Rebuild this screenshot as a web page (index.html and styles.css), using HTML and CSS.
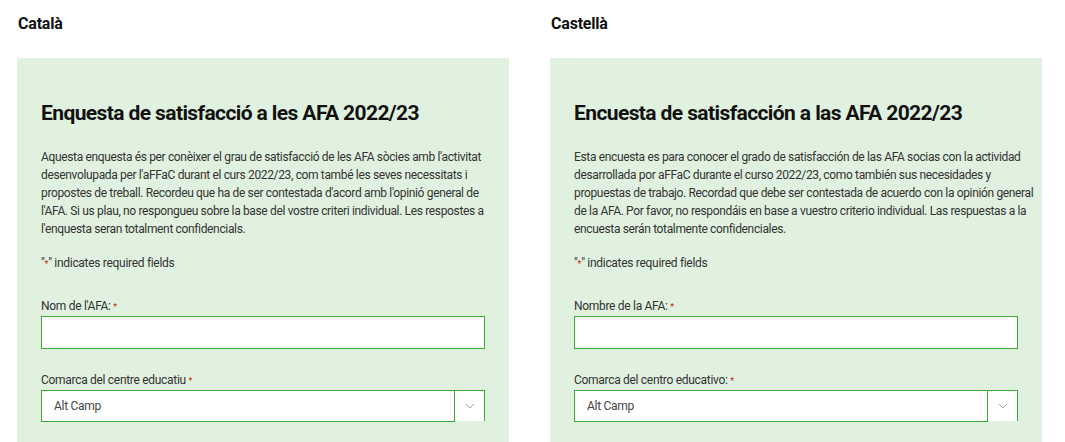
FILE: index.html
```html
<!DOCTYPE html>
<html>
  <head>
    <meta charset="utf-8">
    <title>Enquesta AFA 2022/23</title>
    <link rel="stylesheet" href="styles.css">
  </head>
  <body>
    <div class="columns">
      <div class="column">
        <h3 class="lang">Català</h3>
        <div class="card">
          <h2 class="title">Enquesta de satisfacció a les AFA 2022/23</h2>
          <p class="intro">Aquesta enquesta és per conèixer el grau de satisfacció de les AFA sòcies amb l'activitat<br>desenvolupada per l'aFFaC durant el curs 2022/23, com també les seves necessitats i<br>propostes de treball. Recordeu que ha de ser contestada d'acord amb l'opinió general de<br>l'AFA. Si us plau, no respongueu sobre la base del vostre criteri individual. Les respostes a<br>l'enquesta seran totalment confidencials.</p>
          <p class="required">"<span class="star">*</span>" indicates required fields</p>
          <div class="field">
            <label for="nom-ca">Nom de l'AFA: <span class="star">*</span></label>
            <input class="input" type="text" id="nom-ca">
          </div>
          <div class="field">
            <label for="comarca-ca">Comarca del centre educatiu <span class="star">*</span></label>
            <div class="select">
              <div class="select-value" id="comarca-ca">Alt Camp</div>
              <div class="select-arrow">
                <svg width="10" height="6" viewBox="0 0 10 6"><path d="M1 1l4 4 4-4" fill="none" stroke="#9ab" stroke-width="1"/></svg>
              </div>
            </div>
          </div>
        </div>
      </div>
      <div class="column">
        <h3 class="lang">Castellà</h3>
        <div class="card">
          <h2 class="title">Encuesta de satisfacción a las AFA 2022/23</h2>
          <p class="intro">Esta encuesta es para conocer el grado de satisfacción de las AFA socias con la actividad<br>desarrollada por aFFaC durante el curso 2022/23, como también sus necesidades y<br>propuestas de trabajo. Recordad que debe ser contestada de acuerdo con la opinión general<br>de la AFA. Por favor, no respondáis en base a vuestro criterio individual. Las respuestas a la<br>encuesta serán totalmente confidenciales.</p>
          <p class="required">"<span class="star">*</span>" indicates required fields</p>
          <div class="field">
            <label for="nom-es">Nombre de la AFA: <span class="star">*</span></label>
            <input class="input" type="text" id="nom-es">
          </div>
          <div class="field">
            <label for="comarca-es">Comarca del centro educativo: <span class="star">*</span></label>
            <div class="select">
              <div class="select-value" id="comarca-es">Alt Camp</div>
              <div class="select-arrow">
                <svg width="10" height="6" viewBox="0 0 10 6"><path d="M1 1l4 4 4-4" fill="none" stroke="#9ab" stroke-width="1"/></svg>
              </div>
            </div>
          </div>
        </div>
      </div>
    </div>
  </body>
</html>
```

FILE: styles.css
```css
html {
font-size: 12px;
}

body {
font-family: "Roboto", "Liberation Sans", sans-serif;
margin: 0;
padding: 0;
color: #333;
background: #fff;
overflow: hidden;
}

.columns {
display: grid;
grid-template-columns: 492px 492px;
column-gap: 41px;
padding-left: 17px;
}

.lang {
font-size: 16px;
font-weight: bold;
color: #111;
margin: 13px 0 0 1px;
line-height: 22px;
letter-spacing: -0.2px;
}

.card {
background-color: #e1f1df;
margin-top: 23px;
padding: 40px 24px 30px 24px;
height: 400px;
}

.title {
font-size: 21px;
font-weight: bold;
color: #111;
margin: 0;
line-height: 30px;
letter-spacing: -0.6px;
white-space: nowrap;
}

.intro {
font-size: 12px;
line-height: 18px;
margin: 20px 0 0 0;
letter-spacing: -0.35px;
white-space: nowrap;
}

.required {
font-size: 12px;
line-height: 18px;
margin: 16px 0 0 0;
letter-spacing: -0.3px;
}

.star {
color: #c02b0a;
font-size: 9px;
}

.field {
margin-top: 25px;
}

.field + .field {
margin-top: 23px;
}

.field label {
display: block;
font-size: 12px;
line-height: 16px;
margin-bottom: 1px;
letter-spacing: -0.3px;
}

.input {
display: block;
box-sizing: border-box;
width: 100%;
height: 33px;
border: 1px solid #3aa935;
background: #fff;
margin: 0;
}

.select {
display: flex;
height: 32px;
}

.select-value {
flex: 1;
box-sizing: border-box;
border: 1px solid #3aa935;
background: #fff;
padding: 0 12px;
line-height: 30px;
font-size: 12px;
letter-spacing: -0.3px;
color: #444;
}

.select-arrow {
width: 30px;
box-sizing: border-box;
height: 31px;
border-top: 1px solid #3aa935;
border-right: 1px solid #3aa935;
background: #fff;
display: flex;
align-items: center;
justify-content: center;
}
```
